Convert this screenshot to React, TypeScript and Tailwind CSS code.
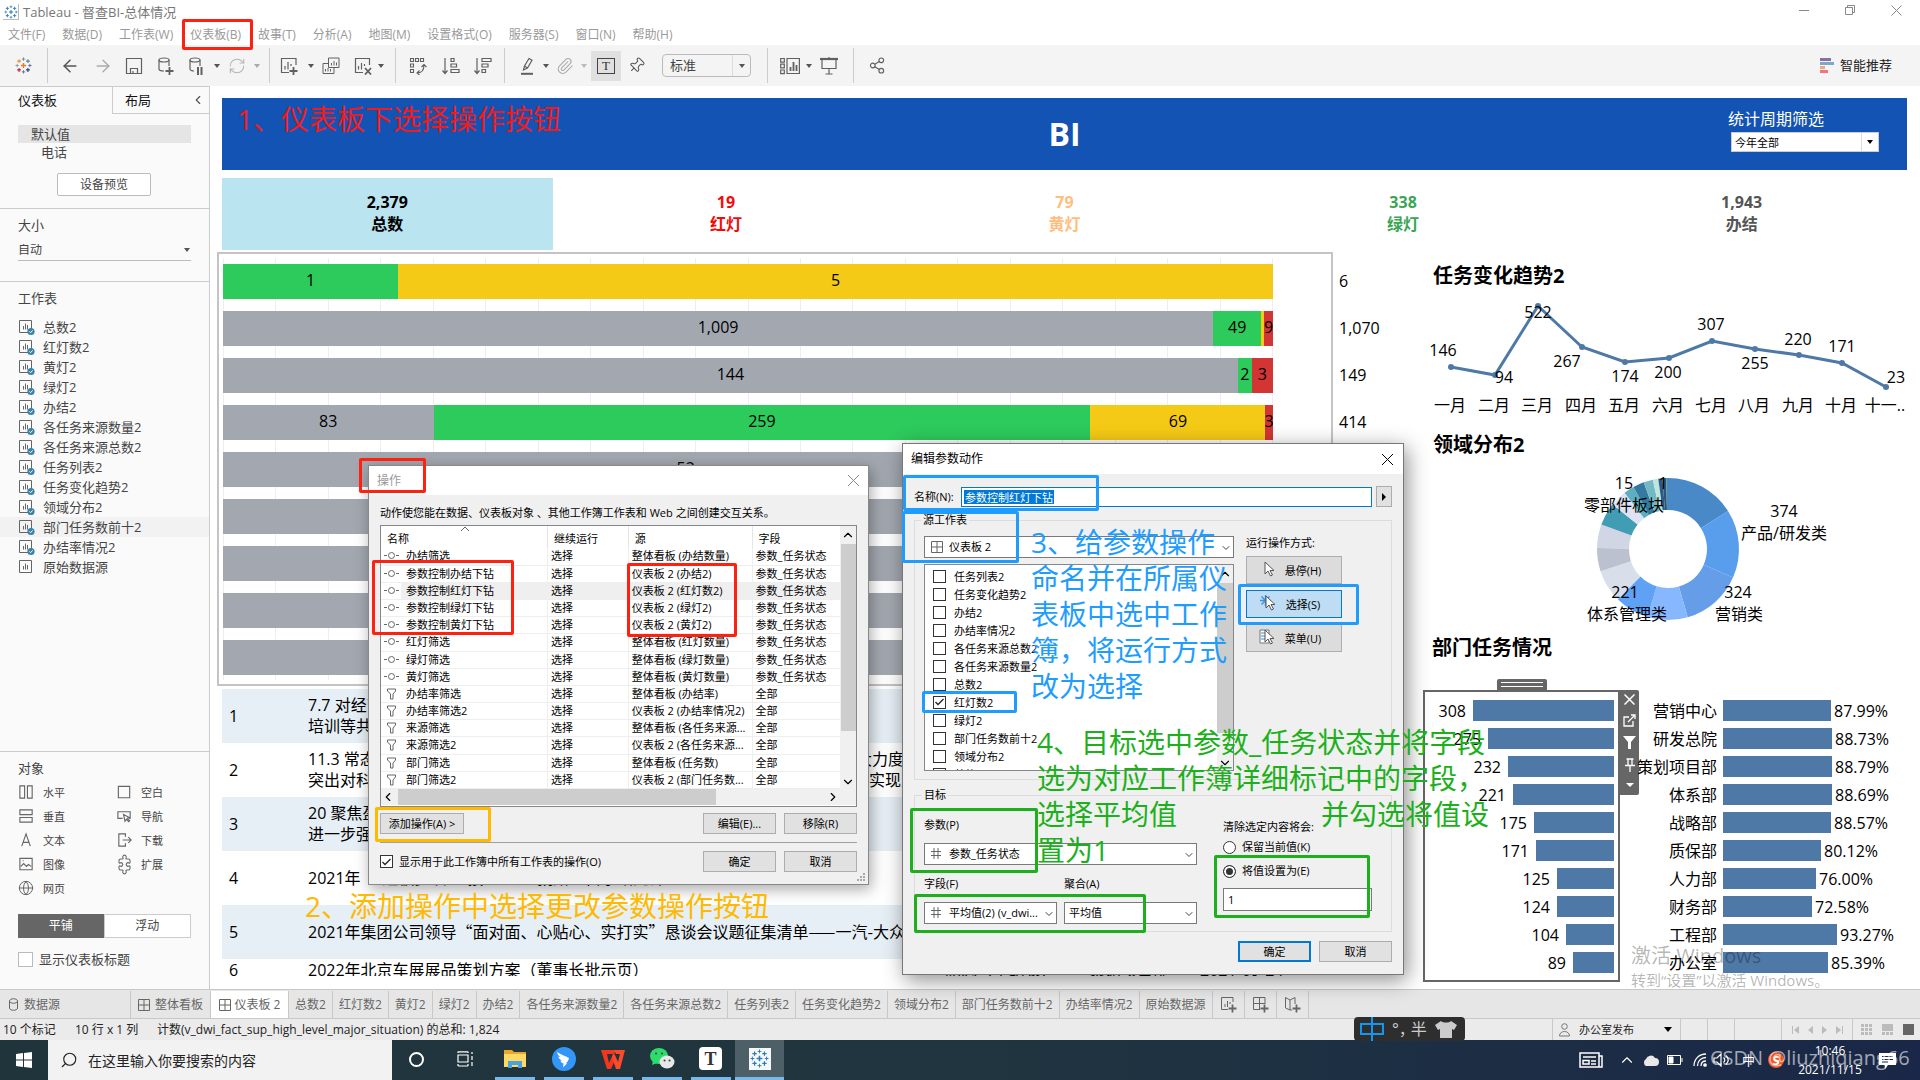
import React from "react";
import { ArrowLeft, ArrowRight, ChevronDown, ChevronLeft, ChevronRight, ChevronUp, Globe, Paperclip, Pin, Puzzle, RefreshCw, Search, X } from "lucide-react";

type Kids = { children?: React.ReactNode };

/* ---------- small drawings ---------- */

function TableauMark({ size, mono }: { size: number; mono?: boolean }) {
  const c = mono
    ? ["#2f7ab5", "#2f7ab5", "#2f7ab5", "#2f7ab5", "#2f7ab5", "#2f7ab5", "#2f7ab5", "#2f7ab5", "#2f7ab5"]
    : ["#e8762c", "#5b879b", "#c72035", "#5c6692", "#eb9129", "#59879b", "#c72035", "#1f457e", "#7199a6"];
  const plus = (x: number, y: number, r: number, color: string, w: number) => (
    <path key={`${x}-${y}`} d={`M${x - r} ${y}h${2 * r}M${x} ${y - r}v${2 * r}`} stroke={color} strokeWidth={w} />
  );
  return (
    <svg width={size} height={size} viewBox="0 0 20 20" fill="none" aria-hidden="true">
      {plus(10, 10, 3, c[0], 1.6)}
      {plus(10, 2.5, 2, c[1], 1)}
      {plus(10, 17.5, 2, c[3], 1)}
      {plus(2.5, 10, 2, c[8], 1)}
      {plus(17.5, 10, 2, c[3], 1)}
      {plus(4.8, 4.8, 2.3, c[4], 1.3)}
      {plus(15.2, 4.8, 2.3, c[5], 1.3)}
      {plus(4.8, 15.2, 2.3, c[6], 1.3)}
      {plus(15.2, 15.2, 2.3, c[7], 1.3)}
    </svg>
  );
}

function Caret({ color = "#555" }: { color?: string }) {
  return (
    <svg width="6" height="4" viewBox="0 0 6 4" aria-hidden="true" className="shrink-0">
      <path d="M0 0h6L3 4z" fill={color} />
    </svg>
  );
}

function Ico({ children, size = 18, color = "#606060" }: Kids & { size?: number; color?: string }) {
  return (
    <svg width={size} height={size} viewBox="0 0 18 18" fill="none" stroke={color} strokeWidth="1.2" aria-hidden="true">
      {children}
    </svg>
  );
}

const GridIcon = () => (
  <svg width="12" height="12" viewBox="0 0 12 12" fill="none" stroke="#666" aria-hidden="true" className="shrink-0">
    <path d="M.5 .5h11v11H.5zM6 .5v11M.5 6h11" />
  </svg>
);

const HashIcon = () => (
  <svg width="10" height="11" viewBox="0 0 10 11" fill="none" stroke="#666" aria-hidden="true">
    <path d="M3 0v11M7 0v11M0 3.5h10M0 7.5h10" />
  </svg>
);

function SheetIcon({ used }: { used: boolean }) {
  return (
    <svg width="18" height="18" viewBox="0 0 18 18" fill="none" aria-hidden="true">
      <path d="M1.5 2.5h12v12h-12z" stroke="#666" />
      <path d="M5.5 11.500V8M7.500 11.500V5.500M9.500 11.500V7" stroke="#666" />
      {used && (
        <>
          <circle cx="13" cy="13.500" r="3.600" fill="#3b83a8" />
          <path d="M11.400 13.500l1.200 1.200 2-2.300" stroke="#fff" />
        </>
      )}
    </svg>
  );
}

/* ---------- title, menu and toolbar ---------- */

const MENU = ["文件(F)", "数据(D)", "工作表(W)", "仪表板(B)", "故事(T)", "分析(A)", "地图(M)", "设置格式(O)", "服务器(S)", "窗口(N)", "帮助(H)"];

function TitleBar() {
  return (
    <header className="flex h-6 items-center bg-white pl-[3px] text-[13px] text-[#777]">
      <span className="grid size-4 place-items-center border-r border-b border-[#bbb]">
        <TableauMark size={14} mono />
      </span>
      <h1 className="ml-1">Tableau - 督查BI-总体情况</h1>
      <div className="mr-[18px] ml-auto flex items-start gap-[34px] pb-1">
        <button aria-label="最小化" className="grid size-3 place-items-center">
          <svg width="10" height="10"><path d="M0 5.500h10" stroke="#888" /></svg>
        </button>
        <button aria-label="还原" className="grid size-3 place-items-center">
          <svg width="10" height="10" fill="none" stroke="#888"><path d="M.5 2.500h7v7h-7zM2.500 2.500v-2h7v7h-2" /></svg>
        </button>
        <button aria-label="关闭" className="grid size-3 place-items-center">
          <svg width="11" height="11" stroke="#888"><path d="M.5 .5l10 10M10.500 .5l-10 10" /></svg>
        </button>
      </div>
    </header>
  );
}

function MenuBar() {
  return (
    <nav className="flex h-[21px] items-center gap-[17px] bg-white pl-2 text-[12px] text-[#999]">
      {MENU.map((m) => (
        <button key={m} className="whitespace-nowrap">{m}</button>
      ))}
    </nav>
  );
}

function Tool({ label, w, children }: Kids & { label: string; w: string }) {
  return (
    <button aria-label={label} className={`grid h-full shrink-0 place-items-center ${w}`}>
      {children}
    </button>
  );
}
const Sep = () => <span className="h-[35px] w-px shrink-0 bg-[#ccc]" />;

function Toolbar() {
  return (
    <div className="flex h-[41px] items-center bg-[#f4f4f4] text-[13px] text-[#444]">
      <Tool label="开始页" w="w-[47px]"><TableauMark size={17} /></Tool>
      <Sep />
      <Tool label="撤消" w="w-[44px]"><ArrowLeft size={20} strokeWidth={1.8} color="#555" /></Tool>
      <Tool label="重做" w="w-[22px]"><ArrowRight size={20} strokeWidth={1.6} color="#aaa" /></Tool>
      <Tool label="保存" w="w-[40px]">
        <Ico><path d="M1.500 1.500h15v15h-15zM5.500 16v-4.500h7V16M8 14v2" /></Ico>
      </Tool>
      <Tool label="新建数据源" w="w-[24px]">
        <Ico>
          <ellipse cx="7" cy="3" rx="5" ry="2" />
          <path d="M2 3v9c0 1 2 2 5 2M12 3v6" />
          <path d="M8.500 14h8M12.500 10v8" strokeWidth="1.800" />
        </Ico>
      </Tool>
      <Tool label="暂停自动更新" w="w-[36px]">
        <Ico>
          <ellipse cx="8" cy="3" rx="5" ry="2" />
          <path d="M3 3v9c0 1 2 2 4 2M13 3v6" />
          <path d="M11 10v8M14.500 10v8" strokeWidth="2" />
        </Ico>
      </Tool>
      <Caret />
      <Tool label="刷新" w="w-[34px]"><RefreshCw size={18} strokeWidth={1.400} color="#b5b5b5" /></Tool>
      <Caret color="#aaa" />
      <span className="w-[9px] shrink-0" />
      <Sep />
      <Tool label="新建工作表" w="w-[38px]">
        <Ico>
          <path d="M16 8V1.500H1.500v14H9M5 12.500V9M8 12.500V5M11 9V7" />
          <path d="M9.500 14h8M13.500 10v8" strokeWidth="1.800" />
        </Ico>
      </Tool>
      <Caret />
      <Tool label="复制" w="w-[34px]">
        <Ico>
          <path d="M6.500 1h10.500v9.500H6.500zM9.500 8.500V6M12 8.500V4M14.500 8.500V5.500M6.500 6.500H1v10h11v-6M3.500 14.500V12M6 14.500V11M8.500 14.500V12" strokeWidth="1" />
        </Ico>
      </Tool>
      <Tool label="清除工作表" w="w-[30px]">
        <Ico>
          <path d="M15.500 8V1.500H1.500v14H9M4.500 12.500V9M7.500 12.500V6M10.500 9V7" />
          <path d="M11 11l6 6.500M17 11l-6 6.500" strokeWidth="1.800" />
        </Ico>
      </Tool>
      <Caret />
      <span className="w-[11px] shrink-0" />
      <Sep />
      <Tool label="交换行和列" w="w-[44px]">
        <Ico>
          <path d="M1.500 1.500h3v3h-3zM6.500 1.500h3v3h-3zM11.500 1.500h3v3h-3zM1.500 7h3v3h-3zM1.500 12.500h3v3h-3zM8 16c5 0 7-3 7-8M12.500 10L15 7.500l2.500 2.500M10.500 13.500L8 16l2.500 2" strokeWidth="1.100" />
        </Ico>
      </Tool>
      <Tool label="升序排序" w="w-[22px]">
        <Ico><path d="M3 1v15M.5 13.500L3 16.500l2.500-3M9 1.500h3v3H9zM9 7h5.500v3H9zM9 12.500h8v3H9z" /></Ico>
      </Tool>
      <Tool label="降序排序" w="w-[42px]">
        <Ico><path d="M3 1v15M.5 13.500L3 16.500l2.500-3M8 1.500h9v3H8zM8 7h6v3H8zM8 12.500h3.500v3H8z" /></Ico>
      </Tool>
      <Sep />
      <Tool label="突出显示" w="w-[44px]">
        <Ico><path d="M3 16.800h12" strokeWidth="2" /><path d="M5.500 13l1-4L11 1.500l3 1.700L9.500 11zM6.500 9l3 2" /></Ico>
      </Tool>
      <span className="-ml-[6px] flex"><Caret /></span>
      <Tool label="组成员" w="w-[32px]"><Paperclip size={18} strokeWidth={1.400} color="#aaa" /></Tool>
      <Caret color="#bbb" />
      <span className="ml-1 grid h-[30px] w-[30px] shrink-0 place-items-center bg-[#e0e0e0]">
        <button aria-label="显示标记标签" className="grid h-4 w-[18px] place-items-center border border-[#444] font-['Liberation_Serif',serif] text-[13px] leading-none text-[#333]">T</button>
      </span>
      <Tool label="固定轴" w="w-[30px]"><Pin size={17} strokeWidth={1.500} color="#555" className="rotate-45" /></Tool>
      <div className="relative ml-[11px] w-[89px] shrink-0">
        <select aria-label="适合" className="block h-[23px] w-full appearance-none rounded-sm border border-[#bbb] bg-[#f4f4f4] pl-[7px] text-[13px]">
          <option>标准</option>
        </select>
        <span className="pointer-events-none absolute inset-y-px right-px grid w-[18px] place-items-center border-l border-[#ddd]"><Caret /></span>
      </div>
      <span className="w-[16px] shrink-0" />
      <Sep />
      <Tool label="显示卡" w="w-[44px]">
        <svg width="20" height="18" viewBox="0 0 20 18" fill="none" stroke="#606060" strokeWidth="1.200">
          <path d="M.7 1.500h3.600v3.600H.7zM.7 7.200h3.600v3.600H.7zM.7 13h3.600v3.600H.7zM7 1.500h12.400v15H7z" />
          <path d="M10.500 14v-4M13.500 14V5M16.500 14V8" strokeWidth="1.800" />
        </svg>
      </Tool>
      <span className="-ml-[6px] flex"><Caret /></span>
      <Tool label="演示模式" w="w-[34px]">
        <Ico><path d="M0 2h18" strokeWidth="2.200" /><path d="M2 2v9.500h14V2M9 0v2M9 11.500V17M5.500 17h7" /></Ico>
      </Tool>
      <span className="w-[7px] shrink-0" />
      <Sep />
      <Tool label="共享" w="w-[46px]">
        <Ico size={17}><circle cx="4" cy="9" r="2.500" /><circle cx="13" cy="3.500" r="2.500" /><circle cx="13" cy="14.500" r="2.500" /><path d="M6.200 7.700l4.600-2.900M6.200 10.300l4.600 2.900" /></Ico>
      </Tool>
      <button className="mr-[28px] ml-auto flex items-center gap-[6px] text-[#222]">
        <svg width="14" height="15"><path d="M0 0h11v3H0z" fill="#8b6f9e" /><path d="M0 4h14v3H0z" fill="#7ba6cf" /><path d="M0 8h5v3H0z" fill="#f5a77c" /><path d="M0 12h8v3H0z" fill="#f77080" /></svg>
        智能推荐
      </button>
    </div>
  );
}

/* ---------- sidebar ---------- */

const SHEETS = ["总数2", "红灯数2", "黄灯2", "绿灯2", "办结2", "各任务来源数量2", "各任务来源总数2", "任务列表2", "任务变化趋势2", "领域分布2", "部门任务数前十2", "办结率情况2", "原始数据源"];

const OBJECTS: [string, React.ReactNode][] = [
  ["水平", <path key="i" d="M2 2h5v13H2zM10 2h5v13h-5z" />],
  ["空白", <path key="i" d="M2.500 2.500h12v12h-12z" />],
  ["垂直", <path key="i" d="M2 2h13v5H2zM2 10h13v5H2z" />],
  ["导航", <path key="i" d="M7 11H2V4h13v7h-1M8 7l1.500 7 1.500-2 2.500 2.500 1-1L12 11l2-1z" />],
  ["文本", <path key="i" d="M4 15L8.500 2 13 15M5.500 11h6" />],
  ["下载", <path key="i" d="M10 5V2H3v13h7v-3M7 8.500h9M13 5.500l3 3-3 3" />],
  ["图像", <path key="i" d="M2 2.500h13v12H2zM3 11l3-3 3 3 2-2 3 2M5 5h1" />],
];

function Sidebar() {
  return (
    <aside className="flex w-[210px] shrink-0 flex-col border-t border-r border-[#ccc] bg-[#fafafa] text-[13px] text-[#444]">
      <div className="flex h-[27px]" role="tablist">
        <button role="tab" aria-selected="true" className="w-[112px] pl-[18px] text-left text-[#111]">仪表板</button>
        <div className="flex flex-1 items-center border-b border-l border-[#ccc] pr-1">
          <button role="tab" aria-selected="false" className="pl-3 text-[#111]">布局</button>
          <button aria-label="折叠" className="ml-auto"><ChevronLeft size={14} color="#555" /></button>
        </div>
      </div>
      <div className="px-[18px] pt-[11px]">
        <p className="h-[18px] bg-[#e5e5e5] pl-[13px] leading-[18px]">默认值</p>
        <p className="h-[18px] pl-[23px] leading-[18px]">电话</p>
        <button className="mt-3 ml-[39px] block h-[23px] w-[94px] rounded-xs border border-[#bbb] bg-white text-[12px]">设备预览</button>
      </div>
      <div className="mt-3 h-[73px] border-t border-[#ccc] px-[18px] pt-[7px]">
        <label htmlFor="size" className="block leading-[18px]">大小</label>
        <div className="relative mt-[3px]">
          <select id="size" className="h-6 w-full appearance-none border-b border-[#bbb] bg-transparent pt-[2px] text-[12px]">
            <option>自动</option>
          </select>
          <span className="pointer-events-none absolute top-[11px] right-[1px]"><Caret /></span>
        </div>
      </div>
      <div className="border-t border-[#ccc] pt-[7px]">
        <h2 className="pl-[18px] leading-[18px]">工作表</h2>
        <ul className="mt-[10px]">
          {SHEETS.map((s, i) => (
            <li key={s} className={`flex h-5 items-center gap-[7px] pl-[18px] ${i === 10 ? "bg-[#f2f2f2]" : ""}`}>
              <SheetIcon used={i < 12} />
              {s}
            </li>
          ))}
        </ul>
      </div>
      <div className="mt-auto h-[238px] border-t border-[#ccc] px-[18px] pt-[7px]">
        <h2 className="leading-[18px]">对象</h2>
        <div className="mt-[3px] grid grid-cols-[98px_1fr] text-[11px]">
          {OBJECTS.map(([name, icon]) => (
            <span key={name} className="flex h-6 items-center gap-2">
              <Ico size={17} color="#666">{icon}</Ico>
              {name}
            </span>
          ))}
          <span className="flex h-6 items-center gap-2"><Puzzle size={17} strokeWidth={1.500} color="#666" className="-rotate-45" />扩展</span>
          <span className="flex h-6 items-center gap-[9px]"><Globe size={16} strokeWidth={1.500} color="#666" />网页</span>
        </div>
        <div className="mt-[14px] flex h-6 text-[12px]">
          <button className="flex-1 bg-[#666] text-white">平铺</button>
          <button className="flex-1 border border-[#ccc] bg-white">浮动</button>
        </div>
        <label className="mt-[14px] flex items-center gap-[6px]">
          <input type="checkbox" className="size-[15px] appearance-none border border-[#bbb] bg-white" />
          显示仪表板标题
        </label>
      </div>
    </aside>
  );
}

/* ---------- dashboard ---------- */

const KPIS = [
  ["2,379", "总数", "text-black bg-[#bbe4f1]"],
  ["19", "红灯", "text-[#f50a0a]"],
  ["79", "黄灯", "text-[#ffbe7d]"],
  ["338", "绿灯", "text-[#3aa655]"],
  ["1,943", "办结", "text-[#555]"],
];

const G = "bg-[#2dca5c]";
const Y = "bg-[#f5ca16]";
const R = "bg-[#d33434]";
const A = "bg-[#a3a8b0]";
const ROWS: { total: string; parts: [number, string, string][] }[] = [
  { total: "6", parts: [[1, G, "1"], [5, Y, "5"]] },
  { total: "1,070", parts: [[1009, A, "1,009"], [49, G, "49"], [3, Y, ""], [9, R, "9"]] },
  { total: "149", parts: [[144, A, "144"], [2, G, "2"], [3, R, "3"]] },
  { total: "414", parts: [[83, A, "83"], [259, G, "259"], [69, Y, "69"], [3, R, "3"]] },
  { total: "", parts: [[52, A, "52"], [7, A, ""]] },
  { total: "", parts: [[1, A, ""]] },
  { total: "", parts: [[1, A, ""]] },
  { total: "", parts: [[1, A, ""]] },
  { total: "", parts: [[1, A, ""]] },
];

function SourceBars() {
  return (
    <div className="flex">
      <div className="flex-1 border-2 border-[#c4c4c4] pt-1 pr-[58px] pb-1 pl-1">
        <div className="grid">
          <div className="col-start-1 row-start-1 flex border-l border-[#eee]">
            {Array.from({ length: 20 }, (_, i) => (
              <span key={i} className="flex-1 border-r border-[#eee]" />
            ))}
          </div>
          <div className="col-start-1 row-start-1 flex flex-col gap-3 pt-[6px] pb-[5px]">
            {ROWS.map((r, i) => (
              <div key={i} className="flex h-[35px]">
                {r.parts.map(([v, color, label], j) => (
                  <div key={j} className={`flex basis-0 justify-center leading-[32px] ${color}`} style={{ flexGrow: v }}>
                    <span className="w-0 overflow-visible whitespace-nowrap"><span className="inline-block -translate-x-1/2">{label}</span></span>
                  </div>
                ))}
              </div>
            ))}
          </div>
        </div>
      </div>
      <ul className="flex w-[90px] flex-col gap-3 pt-3 pl-[6px]">
        {ROWS.map((r, i) => (
          <li key={i} className="h-[35px] leading-[35px]">{r.total}</li>
        ))}
      </ul>
    </div>
  );
}

const TASKS: { a: React.ReactNode; b?: React.ReactNode }[] = [
  { a: <>7.7 对经营<br />培训等共</> },
  { a: <>11.3 常态<br />突出对科</>, b: <>大力度<br /><span className="pl-[13px]">实现业</span></> },
  { a: <>20 聚焦盈<br />进一步强</> },
  { a: <>2021年<span className="pl-4">“短板多项”直接地”公益捐赠人自承诺先锋</span></> },
  { a: <>2021年<span className="font-['Noto_Sans_CJK_SC',sans-serif]">集团公司领导“面对面、心贴心、实打实”恳谈会议题征集清单——一汽-大众</span></> },
];

function TaskTable() {
  return (
    <div className="mt-[3px] mr-[21px] ml-[5px] h-[287px] overflow-hidden">
      <table className="w-full table-fixed border-collapse leading-[21px]">
        <colgroup>
          <col className="w-[86px]" />
          <col className="w-[548px]" />
          <col className="w-[89px]" />
          <col className="w-[144px]" />
          <col className="w-[111px]" />
          <col />
        </colgroup>
        <tbody>
          {TASKS.map((t, i) => (
            <tr key={i} className={`h-[54px] ${i % 2 ? "" : "bg-[#e6eff5]"}`}>
              <td className="pl-[7px]">{i + 1}</td>
              <td className="whitespace-nowrap">{t.a}</td>
              <td className="whitespace-nowrap">{t.b}</td>
              <td /><td /><td />
            </tr>
          ))}
          <tr className="h-[22px] whitespace-nowrap">
            <td className="pl-[7px]">6</td>
            <td>2022年北京车展展品策划方案（董事长批示页）</td>
            <td className="pl-[89px]">副总（单结表）</td>
            <td className="pl-[144px]">策划项目部</td>
            <td className="pl-[111px]">2021-09-24</td>
            <td />
          </tr>
        </tbody>
      </table>
    </div>
  );
}

const TREND: [number, number, string, number, number, string][] = [
  [28, 77, "146", 20, 66, "一月"],
  [72, 85, "94", 81, 93, "二月"],
  [115, 16, "522", 115, 28, "三月"],
  [159, 57, "267", 144, 77, "四月"],
  [202, 72, "174", 202, 92, "五月"],
  [246, 68, "200", 245, 88, "六月"],
  [289, 51, "307", 288, 40, "七月"],
  [332, 59, "255", 332, 79, "八月"],
  [376, 65, "220", 375, 55, "九月"],
  [419, 73, "171", 419, 62, "十月"],
  [463, 97, "23", 473, 93, "十一.."],
];

function Trend() {
  return (
    <svg width="496" height="130" viewBox="0 0 496 130" fontSize="16" textAnchor="middle" className="block">
      <polyline points={TREND.map((t) => `${t[0]},${t[1]}`).join(" ")} fill="none" stroke="#4e79a7" strokeWidth="3" />
      {TREND.map(([x, y, v, lx, ly, m]) => (
        <g key={m}>
          <circle cx={x} cy={y} r="3" fill="#4e79a7" />
          <text x={lx} y={ly}>{v}</text>
          <text x={x - 1} y="121">{m}</text>
        </g>
      ))}
    </svg>
  );
}

const SLICES: [number, string][] = [
  [57.7, "#4989c8"], [113.7, "#589eec"], [163.8, "#669de8"], [196.8, "#87b7ff"], [225, "#5fa2f5"], [251.8, "#d8deea"],
  [270.8, "#bcc1d0"], [290.2, "#d1d6e6"], [308.8, "#419db4"], [322.3, "#dfe2f2"], [330.9, "#5caec0"], [340, "#34799f"],
  [347.7, "#73b9c5"], [352.1, "#bfe5dc"], [355.5, "#2b5c88"], [358.5, "#27557f"], [360, "#4f8fa0"],
];

function Donut() {
  const cx = 245, cy = 88, R1 = 71, R0 = 39;
  const p = (r: number, deg: number) => {
    const t = (deg * Math.PI) / 180;
    return `${(cx + r * Math.sin(t)).toFixed(2)} ${(cy - r * Math.cos(t)).toFixed(2)}`;
  };
  const labels: [number, number, string][] = [
    [201, 28, "15"], [201, 50, "零部件板块"], [240, 28, "1"], [361, 56, "374"], [361, 78, "产品/研发类"],
    [315, 137, "324"], [316, 159, "营销类"], [202, 137, "221"], [204, 159, "体系管理类"],
  ];
  return (
    <svg width="496" height="170" viewBox="0 0 496 170" fontSize="16" textAnchor="middle" className="block">
      {SLICES.map(([end, color], i) => {
        const start = i ? SLICES[i - 1][0] : 0;
        return <path key={end} fill={color} d={`M${p(R1, start)}A${R1} ${R1} 0 0 1 ${p(R1, end)}L${p(R0, end)}A${R0} ${R0} 0 0 0 ${p(R0, start)}Z`} />;
      })}
      {labels.map(([x, y, t]) => (
        <text key={t} x={x} y={y}>{t}</text>
      ))}
    </svg>
  );
}

const DEPTS: [string, number, string, number][] = [
  ["308", 141, "营销中心", 87.99],
  ["275", 126, "研发总院", 88.73],
  ["232", 106, "策划项目部", 88.79],
  ["221", 101, "体系部", 88.69],
  ["175", 80, "战略部", 88.57],
  ["171", 78, "质保部", 80.12],
  ["125", 57, "人力部", 76.0],
  ["124", 57, "财务部", 72.58],
  ["104", 48, "工程部", 93.27],
  ["89", 41, "办公室", 85.39],
];

function DeptCharts() {
  return (
    <div className="flex">
      <div className="w-[197px]">
        <div className="mx-auto flex h-[11px] w-[50px] flex-col justify-center gap-[3px] rounded-t-xs bg-[#666] px-1">
          <span className="h-px bg-white" />
          <span className="h-px bg-white" />
        </div>
        <div className="flex h-[292px] flex-col gap-[7px] border-2 border-[#666] pt-2 pr-1">
          {DEPTS.map(([t, w]) => (
            <div key={t} className="flex h-[21px] items-center justify-end gap-[7px] leading-none">
              {t}
              <span className="h-full bg-[#4e79a7]" style={{ width: w }} />
            </div>
          ))}
        </div>
      </div>
      <div className="mt-[11px] flex h-[105px] w-[19px] shrink-0 flex-col items-center justify-between rounded-r-xs bg-[#666] pt-1 pb-[6px]">
        <svg width="11" height="11" stroke="#fff" strokeWidth="1.500"><path d="M.5 .5l10 10M10.500 .5l-10 10" /></svg>
        <svg width="13" height="13" fill="none" stroke="#fff" strokeWidth="1.300"><path d="M6 3H1v9h9V7M5 8l6-6M8 1h4v4" /></svg>
        <svg width="13" height="13" fill="#fff"><path d="M0 0h13L8 6v7H5V6z" /></svg>
        <svg width="10" height="14" fill="none" stroke="#fff" strokeWidth="1.300"><path d="M1.500 1h7M3 1v6M7 1v6M0 7.500h10M5 8v6" /></svg>
        <svg width="8" height="8" fill="#fff"><path d="M0 2h8L4 6z" /></svg>
      </div>
      <div className="mt-[21px] flex flex-1 flex-col gap-[7px]">
        {DEPTS.map(([t, , name, pct]) => (
          <div key={t} className="flex h-[21px] items-center leading-none whitespace-nowrap">
            <span className="w-[78px] text-right"><span className="-ml-4">{name}</span></span>
            <span className="ml-[6px] h-full bg-[#4e79a7]" style={{ width: Math.round(pct * 1.225) }} />
            <span className="ml-[3px]">{pct.toFixed(2)}%</span>
          </div>
        ))}
      </div>
    </div>
  );
}

function Dashboard() {
  return (
    <main className="flex-1 overflow-hidden bg-white pt-3 pl-[7px] text-[16px] text-black">
      <div className="mr-[13px] ml-[5px] grid h-[72px] grid-cols-[1fr_auto_1fr] items-center bg-[#1353b3] text-white">
        <span />
        <h2 className="text-[32px] leading-none font-bold">BI</h2>
        <div className="mr-[28px] mb-[10px] ml-auto w-[148px]">
          <label htmlFor="period" className="-ml-[3px] block leading-[26px]">统计周期筛选</label>
          <div className="relative">
            <select id="period" className="block h-5 w-full appearance-none border border-[#ccc] bg-white pl-[3px] text-[11px] text-black">
              <option>今年全部</option>
            </select>
            <span className="pointer-events-none absolute inset-y-px right-px grid w-[17px] place-items-center border-l border-[#ddd]"><Caret color="#000" /></span>
          </div>
        </div>
      </div>
      <div className="mt-2 mr-[13px] ml-[5px] grid grid-cols-5 gap-2 font-bold">
        {KPIS.map(([n, l, c]) => (
          <div key={l} className={`h-[72px] pt-[13px] text-center leading-[22px] ${c}`}>
            <p>{n}</p>
            <p>{l}</p>
          </div>
        ))}
      </div>
      <div className="mt-[2px] flex">
        <section className="min-w-0 flex-1">
          <SourceBars />
          <TaskTable />
        </section>
        <section className="w-[497px] shrink-0">
          <h3 className="mt-[9px] pl-[10px] text-[20px] leading-[29px] font-bold">任务变化趋势2</h3>
          <Trend />
          <h3 className="mt-[9px] pl-[10px] text-[20px] leading-8 font-bold">领域分布2</h3>
          <Donut />
          <h3 className="mt-px pl-[9px] text-[20px] leading-8 font-bold">部门任务情况</h3>
          <div className="mt-[15px]"><DeptCharts /></div>
        </section>
      </div>
    </main>
  );
}

/* ---------- bottom bars ---------- */

const TABS = ["总数2", "红灯数2", "黄灯2", "绿灯2", "办结2", "各任务来源数量2", "各任务来源总数2", "任务列表2", "任务变化趋势2", "领域分布2", "部门任务数前十2", "办结率情况2", "原始数据源"];

function SheetTabs() {
  return (
    <nav className="flex h-[30px] border-y border-[#c8c8c8] bg-[#e6e6e6] pt-px text-[12px] text-[#666]">
      <button className="flex w-[131px] items-center gap-[6px] border-r border-[#c8c8c8] pl-[9px]">
        <svg width="9" height="13" fill="none" stroke="#666"><path d="M.5 3v7c0 3 8 3 8 0V3M.5 3c0-3 8-3 8 0s-8 3-8 0" /></svg>
        数据源
      </button>
      <button className="flex w-[80px] items-center justify-center gap-[5px] border-r border-[#c8c8c8]"><GridIcon />整体看板</button>
      <button className="flex w-[78px] items-center justify-center gap-1 border-r border-[#c8c8c8] bg-white whitespace-nowrap"><GridIcon />仪表板 2</button>
      {TABS.map((t) => (
        <button key={t} className="border-r border-[#c8c8c8] px-[6px] whitespace-nowrap">{t}</button>
      ))}
      {["M13 6V1.500H1.500v12H8M5 11V8M7.500 11V5M10 8V6", "M13 8V1.500H1.500v12H8M7.500 1.500v12M1.500 7.500H13", "M1.500 1.500L6 4l5-2.500V8M1.500 1.500V12L6 14V4M6 14h2"].map((d, i) => (
        <button key={d} aria-label={["新建工作表", "新建仪表板", "新建故事"][i]} className="grid w-8 place-items-center border-r border-[#c8c8c8]">
          <svg width="17" height="17" fill="none" stroke="#666"><path d={d} /><path d="M8.500 12.500h8M12.500 8.500v8" strokeWidth="1.800" /></svg>
        </button>
      ))}
    </nav>
  );
}

function StatusBar() {
  return (
    <footer className="flex h-[21px] items-center bg-[#ebebeb] pl-[3px] text-[12px] text-[#222]">
      <span className="w-[72px]">10 个标记</span>
      <span className="w-[82px]">10 行 x 1 列</span>
      <span>计数(v_dwi_fact_sup_high_level_major_situation) 的总和: 1,824</span>
      <div className="ml-auto flex h-full items-stretch text-[11px]">
        <button className="flex w-[128px] items-center border-l border-[#c8c8c8] pr-2 pl-[6px]">
          <svg width="11" height="14" fill="none" stroke="#777"><circle cx="5.500" cy="3.500" r="2.800" /><path d="M.5 13c0-6 10-6 10 0z" /></svg>
          <span className="ml-[9px]">办公室发布</span>
          <span className="ml-auto"><svg width="8" height="5"><path d="M0 0h8L4 5z" /></svg></span>
        </button>
        <span className="w-[27px] border-l border-[#c8c8c8]" />
        <span className="w-[27px] border-l border-[#c8c8c8]" />
        <span className="w-[47px] border-l border-[#c8c8c8]" />
        <div className="flex w-[71px] items-center justify-center gap-[9px] border-l border-[#c8c8c8]">
          <svg width="7" height="8" fill="#bbb"><path d="M0 0h1v8H0zM7 0v8L2 4z" /></svg>
          <svg width="5" height="8" fill="#bbb"><path d="M5 0v8L0 4z" /></svg>
          <svg width="5" height="8" fill="#bbb"><path d="M0 0v8l5-4z" /></svg>
          <svg width="7" height="8" fill="#bbb"><path d="M6 0h1v8H6zM0 0v8l5-4z" /></svg>
        </div>
        <div className="flex w-[68px] items-center gap-[10px] border-l border-[#c8c8c8] pl-2">
          <svg width="11" height="11" fill="#bbb"><path d="M0 0h3v3H0zM4 0h3v3H4zM8 0h3v3H8zM0 4h3v3H0zM4 4h3v3H4zM8 4h3v3H8zM0 8h3v3H0zM4 8h3v3H4zM8 8h3v3H8z" /></svg>
          <svg width="11" height="11" fill="#bbb"><path d="M0 0h11v7H0zM0 8h3v3H0zM4 8h3v3H4zM8 8h3v3H8z" /></svg>
          <svg width="11" height="11"><path d="M0 0h11v11H0z" fill="#666" /></svg>
        </div>
      </div>
    </footer>
  );
}

function Task({ label, children, active, open = true }: Kids & { label: string; active?: boolean; open?: boolean }) {
  return (
    <button aria-label={label} className={`flex h-full w-[49px] shrink-0 flex-col items-center ${active ? "bg-[#4d6068]" : ""}`}>
      <span className="grid flex-1 place-items-center">{children}</span>
      <span className={`h-[3px] ${active ? "w-full" : "w-10"} ${open ? "bg-[#76b9ed]" : ""}`} />
    </button>
  );
}

function Taskbar() {
  return (
    <div className="flex h-10 items-center bg-linear-to-r from-[#1f343b] via-[#20353f] to-[#1a2748] text-white">
      <button aria-label="开始" className="grid h-full w-12 place-items-center">
        <svg width="16" height="16" fill="#fff"><path d="M0 2l7-1v6.500H0zM8 .9L16 0v7.500H8zM0 8.500h7V15l-7-1zM8 8.500h8V16l-8-1z" /></svg>
      </button>
      <label className="flex h-full w-[344px] items-center bg-[#f2f2f2] pl-3 text-[#222]">
        <Search size={18} strokeWidth={1.500} className="-scale-x-100" />
        <input aria-label="搜索" defaultValue="在这里输入你要搜索的内容" className="ml-[10px] w-[280px] bg-transparent text-[14px] outline-none" />
      </label>
      <Task label="Cortana" open={false}><svg width="17" height="17" fill="none" stroke="#fff" strokeWidth="2"><circle cx="8.500" cy="9.500" r="6.500" /></svg></Task>
      <Task label="任务视图" open={false}>
        <svg width="17" height="16" fill="none" stroke="#fff" strokeWidth="1.200"><path d="M1 4h10v7H1zM1 2V.5M11 2V.5M1 .8h10M1 13v2M11 13v2M1 15h10M15 1v2M15 5v4M15 11v4" /></svg>
      </Task>
      <Task label="文件资源管理器">
        <svg width="22" height="18" viewBox="0 0 22 18"><path d="M0 0h8l2 2h12v14H0z" fill="#e9a825" /><path d="M0 4h22v13H0z" fill="#ffd968" /><path d="M4 18v-7h14v7h-4v-3H8v3z" fill="#4aa3df" /></svg>
      </Task>
      <Task label="钉钉">
        <svg width="24" height="24"><circle cx="12" cy="12" r="12" fill="#3296fa" /><path d="M5 5c4 3 8 3.500 12 6-1 4-2 4-3 5l1 .5-4 4 .5-4c-2-.5-3-2-3-3l2 .3C7 12 6.500 11 6.500 9.500l2 .5C6 8.500 5.500 7 5 5z" fill="#fff" /></svg>
      </Task>
      <Task label="WPS">
        <svg width="24" height="20" viewBox="0 0 24 20"><path d="M0 1h15l-2 4H6l2 9 4-9 3 4-5 11H6z" fill="#f5351d" /><path d="M13 1h11l-5 19h-4L11 8l2-4 4 9 2-8h-4z" fill="#ff4a2a" /></svg>
      </Task>
      <Task label="微信">
        <svg width="26" height="24"><ellipse cx="10" cy="9" rx="9" ry="8" fill="#2ddc6c" /><path d="M4 14l-1 4 5-2z" fill="#2ddc6c" /><ellipse cx="18" cy="15" rx="7.500" ry="6.500" fill="#e8e8e8" /><path d="M7 6.500h.1M13 6.500h.1M15.500 13.500h.1M20.500 13.500h.1" stroke="#444" strokeWidth="2" strokeLinecap="round" /></svg>
      </Task>
      <Task label="Typora">
        <span className="grid size-[23px] place-items-center rounded-[4px] bg-white font-['Liberation_Serif',serif] text-[18px] leading-none font-bold text-[#333]">T</span>
      </Task>
      <Task label="Tableau" active>
        <span className="grid size-[22px] place-items-center bg-[#f4f8fb]"><TableauMark size={19} mono /></span>
      </Task>
      <div className="mr-[24px] ml-auto flex items-center text-[12px]">
        <svg width="24" height="16" fill="none" stroke="#fff" strokeWidth="1.500"><path d="M1 1h19v14H1zM20 4h3v11H3M4 5h13M4 8.500h6v3.500H4zM12 9h5M12 12h5" /></svg>
        <ChevronUp size={18} strokeWidth={1.500} className="ml-[15px]" />
        <svg width="17" height="12" className="ml-[6px]" fill="#e8e8e8"><path d="M4 12a4 4 0 0 1 0-7 5 5 0 0 1 9-1 4 4 0 0 1 0 8z" /></svg>
        <svg width="16" height="10" className="ml-2" fill="none" stroke="#fff"><path d="M.5 .5h13v9H.5zM15 3v4" /><path d="M2 2h4v6H2z" fill="#fff" /></svg>
        <svg width="14" height="14" className="ml-[10px]" fill="none" stroke="#fff" strokeWidth="1.300"><path d="M1 13C1 6 6 1 13 1M4.500 13c0-5 3.500-8.500 8.500-8.500M8 13c0-3 2-5 5-5" /><circle cx="12" cy="12" r="1.200" fill="#fff" /></svg>
        <svg width="17" height="14" className="ml-[6px]" fill="none" stroke="#fff" strokeWidth="1.200"><path d="M1 5h3l4-4v12L4 9H1zM10.500 4.500c1.500 1.500 1.500 3.500 0 5M13 2.500c3 3 3 6 0 9" /></svg>
        <span className="ml-3 text-[13px]">中</span>
        <span className="ml-[13px] grid size-4 place-items-center rounded-full bg-[#f25522] text-[13px] leading-none font-bold">S</span>
        <p className="ml-[10px] w-[72px] text-center leading-[19px]">10:46<br />2021/11/15</p>
        <svg width="17" height="17" className="ml-[13px]" fill="#fff"><path d="M0 1h17v12H9l-3 4v-4H0z" /><path d="M3 4.500h11M3 7.500h11M3 10h6" stroke="#1a2748" /></svg>
      </div>
    </div>
  );
}

/* ---------- dialogs ---------- */

const WIN_BTN = "h-[21px] w-[73px] border border-[#adadad] bg-[#e1e1e1]";

function Check({ id, label, checked, gap }: { id: string; label: string; checked?: boolean; gap: string }) {
  return (
    <label htmlFor={id} className={`flex items-center whitespace-nowrap ${gap}`}>
      <span className="grid size-[13px] shrink-0 place-items-center">
        <input id={id} type="checkbox" defaultChecked={checked} className="col-start-1 row-start-1 size-[13px] appearance-none border border-[#333] bg-white" />
        {checked && (
          <svg width="9" height="8" fill="none" stroke="#222" strokeWidth="1.300" className="pointer-events-none col-start-1 row-start-1"><path d="M.5 4L3 6.500 8.500 1" /></svg>
        )}
      </span>
      {label}
    </label>
  );
}

const ACTIONS: [string, string, string][] = [
  ["办结筛选", "整体看板 (办结数量)", "参数_任务状态"],
  ["参数控制办结下钻", "仪表板 2 (办结2)", "参数_任务状态"],
  ["参数控制红灯下钻", "仪表板 2 (红灯数2)", "参数_任务状态"],
  ["参数控制绿灯下钻", "仪表板 2 (绿灯2)", "参数_任务状态"],
  ["参数控制黄灯下钻", "仪表板 2 (黄灯2)", "参数_任务状态"],
  ["红灯筛选", "整体看板 (红灯数量)", "参数_任务状态"],
  ["绿灯筛选", "整体看板 (绿灯数量)", "参数_任务状态"],
  ["黄灯筛选", "整体看板 (黄灯数量)", "参数_任务状态"],
  ["办结率筛选", "整体看板 (办结率)", "全部"],
  ["办结率筛选2", "仪表板 2 (办结率情况2)", "全部"],
  ["来源筛选", "整体看板 (各任务来源...", "全部"],
  ["来源筛选2", "仪表板 2 (各任务来源...", "全部"],
  ["部门筛选", "整体看板 (任务数)", "全部"],
  ["部门筛选2", "仪表板 2 (部门任务数...", "全部"],
];

function ActionsDialog() {
  return (
    <div role="dialog" aria-label="操作" className="absolute top-[465px] left-[368px] w-[501px] border border-[#888] bg-[#f0f0f0] text-[11px] text-black shadow-[2px_4px_14px_rgba(0,0,0,0.35)]">
      <div className="flex h-[29px] items-center justify-between bg-white pr-[9px] pl-2 text-[12px] text-[#999]">
        操作
        <button aria-label="关闭"><svg width="11" height="11" stroke="#888"><path d="M0 0l11 11M11 0L0 11" /></svg></button>
      </div>
      <div className="px-[11px] pb-3">
        <p className="pt-[9px] leading-[18px] whitespace-nowrap">动作使您能在数据、仪表板对象 、其他工作簿工作表和 Web 之间创建交互关系。</p>
        <div className="relative mt-[3px] h-[282px] border border-[#828790] bg-white">
          <div className="flex">
            <table className="flex-1 table-fixed border-collapse leading-4 whitespace-nowrap">
              <colgroup>
                <col className="w-[20px]" />
                <col className="w-[147px]" />
                <col className="w-[81px]" />
                <col className="w-[124px]" />
                <col className="w-[88px]" />
              </colgroup>
              <thead>
                <tr className="h-[22px] text-left">
                  <th colSpan={2} className="border-r border-[#e5e5e5] pt-1 pl-[6px] font-normal">名称</th>
                  <th className="border-r border-[#e5e5e5] pt-1 pl-[6px] font-normal">继续运行</th>
                  <th className="border-r border-[#e5e5e5] pt-1 pl-[6px] font-normal">源</th>
                  <th className="pt-1 pl-[6px] font-normal">字段</th>
                </tr>
              </thead>
              <tbody>
                {ACTIONS.map(([n, s, f], i) => (
                  <tr key={n} className="h-[17px] border-b border-[#eee]">
                    <td className="pl-[3px]">
                      {i < 8 ? (
                        <svg width="15" height="10" fill="none" stroke="#666"><circle cx="7.500" cy="4.500" r="3" /><path d="M0 4.500h3M12 4.500h3" /></svg>
                      ) : (
                        <svg width="15" height="12" fill="none" stroke="#666"><path d="M3.500 1h8v2L9 6v5H6.500V6l-3-3z" /></svg>
                      )}
                    </td>
                    {[n, "选择", s, f].map((c, j) => (
                      <td key={j} className={`${j === 0 ? "pl-[5px]" : "pl-[3px]"} ${j < 3 ? "border-r border-[#eee]" : ""} ${i === 2 ? "bg-[#efefef]" : ""}`}>{c}</td>
                    ))}
                  </tr>
                ))}
              </tbody>
            </table>
            <div className="flex h-[263px] w-4 flex-col items-center bg-[#f0f0f0]">
              <ChevronUp size={14} className="my-[2px] shrink-0" />
              <span className="h-[187px] w-[15px] shrink-0 bg-[#cdcdcd]" />
              <ChevronDown size={14} className="mt-auto" />
            </div>
          </div>
          <div className="flex h-4 items-center bg-[#f0f0f0] pr-4">
            <ChevronLeft size={14} className="mr-[3px]" />
            <span className="h-4 w-[318px] bg-[#cdcdcd]" />
            <ChevronRight size={14} className="ml-auto" />
          </div>
          <svg width="8" height="4" fill="none" stroke="#666" className="absolute top-px left-[80px]"><path d="M0 4l4-4 4 4" /></svg>
        </div>
        <div className="flex gap-2 border-b border-[#a0a0a0] pt-[6px] pb-2">
          <button className="mr-auto h-[21px] w-[84px] border border-[#adadad] bg-[#e1e1e1]">添加操作(A) &gt;</button>
          <button className={WIN_BTN}>编辑(E)...</button>
          <button className={WIN_BTN}>移除(R)</button>
        </div>
        <div className="mt-2 flex items-center gap-2">
          <Check id="all" label="显示用于此工作簿中所有工作表的操作(O)" checked gap="gap-[6px]" />
          <button className={`ml-auto ${WIN_BTN}`}>确定</button>
          <button className={WIN_BTN}>取消</button>
        </div>
      </div>
      <svg width="8" height="8" fill="#aaa" className="absolute right-[3px] bottom-[3px]"><path d="M6 0h2v2H6zM3 3h2v2H3zM6 3h2v2H6zM0 6h2v2H0zM3 6h2v2H3zM6 6h2v2H6z" /></svg>
    </div>
  );
}

const SOURCES = ["任务列表2", "任务变化趋势2", "办结2", "办结率情况2", "各任务来源总数2", "各任务来源数量2", "总数2", "红灯数2", "绿灯2", "部门任务数前十2", "领域分布2", "总体2"];

function Combo({ label, value, icon, pad = "pl-1" }: { label: string; value: string; icon?: React.ReactNode; pad?: string }) {
  return (
    <span className="relative block w-full">
      <select aria-label={label} className={`block h-[22px] w-full appearance-none border border-[#7a7a7a] bg-white text-[11px] leading-[20px] ${pad}`}>
        <option>{value}</option>
      </select>
      {icon && <span className="pointer-events-none absolute top-[5px] left-[7px]">{icon}</span>}
      <ChevronDown size={12} color="#444" className="pointer-events-none absolute top-[6px] right-[2px]" />
    </span>
  );
}

const Cursor = () => <path d="M6 1v12l3-3 2.500 5 2-1L11 9.500h4z" fill="#fff" stroke="#555" />;

function EditDialog() {
  return (
    <div role="dialog" aria-label="编辑参数动作" className="absolute top-[443px] left-[902px] w-[502px] border border-[#777] bg-[#f0f0f0] text-[11px] text-black shadow-[3px_5px_20px_rgba(0,0,0,0.45)]">
      <div className="flex h-[30px] items-center justify-between bg-white pr-[10px] pl-2 text-[12px]">
        编辑参数动作
        <button aria-label="关闭"><svg width="11" height="11" stroke="#000"><path d="M0 0l11 11M11 0L0 11" /></svg></button>
      </div>
      <div className="px-[11px] pb-3">
        <div className="flex items-center pt-3">
          <label htmlFor="name" className="w-[47px]">名称(N):</label>
          <span className="flex h-5 flex-1 items-center border border-[#0078d7] bg-white pl-[2px]">
            <input id="name" defaultValue="参数控制红灯下钻" className="h-[14px] w-[90px] bg-[#0078d7] pl-px text-[11px] text-white outline-none" />
          </span>
          <button aria-label="插入" className="ml-1 grid h-[21px] w-4 place-items-center border border-[#adadad] bg-[#e1e1e1]"><svg width="4" height="8"><path d="M0 0v8l4-4z" /></svg></button>
        </div>
        <fieldset className="mt-[6px] flex h-[267px] border border-[#dcdcdc] px-[9px]">
          <legend className="-ml-[3px] px-[2px] leading-[14px]">源工作表</legend>
          <div className="w-[310px] pt-[9px]">
            <Combo label="源" value="仪表板 2" icon={<GridIcon />} pad="pl-[24px]" />
            <div className="mt-[6px] flex h-[207px] border border-[#828790] bg-white">
              <div className="flex-1 overflow-hidden pt-[2px] pl-2">
                {SOURCES.map((s) => (
                  <div key={s} className="flex h-[18px] items-center"><Check id={s} label={s} checked={s === "红灯数2"} gap="gap-2" /></div>
                ))}
              </div>
              <div className="flex w-4 flex-col items-center bg-[#f0f0f0]">
                <ChevronUp size={14} className="my-[2px] shrink-0" />
                <span className="h-[150px] w-4 bg-[#cdcdcd]" />
                <ChevronDown size={14} className="mt-auto" />
              </div>
            </div>
          </div>
          <div className="ml-3 flex w-24 flex-col gap-[6px] pt-[9px]">
            <p className="leading-[14px]">运行操作方式:</p>
            <button className="flex h-7 items-center justify-center gap-2 border border-[#adadad] bg-[#dcdcdc] pr-2"><svg width="18" height="18"><Cursor /></svg>悬停(H)</button>
            <button className="flex h-7 items-center justify-center gap-2 border border-[#0078d7] bg-[#bedcf4] pr-2"><svg width="18" height="18"><path d="M5.500 0v11M0 5.500h11M1.500 1.500l8 8M9.500 1.500l-8 8" stroke="#3b8ee0" strokeWidth="1.300" /><Cursor /></svg>选择(S)</button>
            <button className="flex h-7 items-center justify-center gap-2 border border-[#adadad] bg-[#dcdcdc] pr-2"><svg width="18" height="18"><path d="M1 1h9v13H1z" fill="#fff" stroke="#777" /><path d="M2 4h4M2 7h4M2 10h4" stroke="#3b8ee0" /><Cursor /></svg>菜单(U)</button>
          </div>
        </fieldset>
        <fieldset className="mt-2 flex h-[144px] border border-[#dcdcdc] px-[9px]">
          <legend className="-ml-[2px] px-[2px] leading-[14px]">目标</legend>
          <div className="w-[273px] pt-4">
            <p className="leading-[14px]">参数(P)</p>
            <div className="mt-[11px]"><Combo label="参数" value="参数_任务状态" icon={<HashIcon />} pad="pl-[24px]" /></div>
            <div className="mt-3 grid grid-cols-2 gap-x-[7px] gap-y-[11px] leading-[14px]">
              <p>字段(F)</p>
              <p>聚合(A)</p>
              <Combo label="字段" value="平均值(2) (v_dwi..." icon={<HashIcon />} pad="pl-[24px]" />
              <Combo label="聚合" value="平均值" />
            </div>
          </div>
          <div className="ml-[26px] w-[149px] pt-[18px] leading-[14px]">
            <p>清除选定内容将会:</p>
            <label className="mt-[6px] flex items-center gap-[6px]">
              <input type="radio" name="clear" className="size-[13px] appearance-none rounded-full border border-[#333] bg-white" />
              保留当前值(K)
            </label>
            <label className="mt-[10px] flex items-center gap-[6px]">
              <input type="radio" name="clear" defaultChecked className="size-[13px] appearance-none rounded-full border border-[#333] bg-[#333] ring-2 ring-white ring-inset" />
              将值设置为(E)
            </label>
            <input aria-label="值" defaultValue="1" className="mt-[10px] h-[23px] w-full border border-[#7a7a7a] bg-white pl-1 text-[11px]" />
          </div>
        </fieldset>
        <div className="mt-[9px] flex justify-end gap-2">
          <button className="h-[21px] w-[73px] border-2 border-[#0078d7] bg-[#e1e1e1]">确定</button>
          <button className={WIN_BTN}>取消</button>
        </div>
      </div>
    </div>
  );
}

/* ---------- mark-up drawn over the desktop ---------- */

const RED = "border-[#ff2010]";
const BLUE = "border-[#1e9dff]";
const GREEN = "border-[#1cb01c]";

function Notes() {
  const box = "pointer-events-none absolute rounded-xs border-3";
  const note = "pointer-events-none absolute text-[28px] leading-9 whitespace-pre";
  return (
    <>
      <span className={`${box} ${RED} top-[19px] left-[182px] h-[31px] w-[71px]`} />
      <span className={`${box} ${RED} top-[458px] left-[359px] h-[35px] w-[67px]`} />
      <span className={`${box} ${RED} top-[560px] left-[372px] h-[75px] w-[142px]`} />
      <span className={`${box} ${RED} top-[563px] left-[627px] h-[74px] w-[110px]`} />
      <span className={`${box} top-[807px] left-[375px] h-[35px] w-[116px] border-[#ffb900]`} />
      <span className={`${box} ${BLUE} top-[475px] left-[903px] h-[36px] w-[196px]`} />
      <span className={`${box} ${BLUE} top-[511px] left-[902px] h-[52px] w-[117px]`} />
      <span className={`${box} ${BLUE} top-[691px] left-[922px] h-[22px] w-[95px]`} />
      <span className={`${box} ${BLUE} top-[584px] left-[1238px] h-[41px] w-[121px]`} />
      <span className={`${box} ${GREEN} top-[808px] left-[910px] h-[65px] w-[128px]`} />
      <span className={`${box} ${GREEN} top-[894px] left-[914px] h-[39px] w-[232px]`} />
      <span className={`${box} ${GREEN} top-[855px] left-[1214px] h-[63px] w-[156px]`} />
      <p className={`${note} top-[101px] left-[237px] text-[#f21b1b]`}>1、仪表板下选择操作按钮</p>
      <p className={`${note} top-[888px] left-[305px] text-[#ffb900]`}>2、添加操作中选择更改参数操作按钮</p>
      <p className={`${note} top-[524px] left-[1031px] text-[#1e9dff]`}>{"3、给参数操作\n命名并在所属仪\n表板中选中工作\n簿，将运行方式\n改为选择"}</p>
      <p className={`${note} top-[724px] left-[1037px] text-[#1cb01c]`}>{"4、目标选中参数_任务状态并将字段\n选为对应工作簿详细标记中的字段，\n选择平均值"}<span className="pl-[144px]">并勾选将值设</span>{"\n置为1"}</p>
      <div className="pointer-events-none absolute top-[942px] left-[1631px] whitespace-nowrap text-black/30">
        <p className="text-[20px] leading-7">激活 Windows</p>
        <p className="text-[15px] leading-5">转到“设置”以激活 Windows。</p>
      </div>
      <p className="pointer-events-none absolute top-[1044px] left-[1710px] text-[20px] leading-7 text-white/60">CSDN @liuzhiqiang66</p>
      <div className="absolute top-[1017px] left-[1354px] flex h-6 w-[111px] items-center gap-2 rounded-sm bg-[#2e2e2e] pl-[6px] text-[16px] text-[#ccc]">
        <svg width="24" height="24" fill="none" stroke="#1296f0" strokeWidth="2"><path d="M1 7h22v10H1zM12 0v24" /></svg>
        <span>°，</span>
        <span className="-ml-3">半</span>
        <svg width="22" height="18" fill="#ccc"><path d="M6 1c2 2 8 2 10 0l6 4-3 5-2-1v9H5V9l-2 1-3-5z" /></svg>
      </div>
    </>
  );
}

export default function App() {
  return (
    <div className="relative flex min-h-screen w-full flex-col overflow-hidden bg-white font-['Open_Sans','Noto_Sans_CJK_SC',sans-serif] leading-none">
      <TitleBar />
      <MenuBar />
      <Toolbar />
      <div className="flex flex-1">
        <Sidebar />
        <Dashboard />
      </div>
      <SheetTabs />
      <StatusBar />
      <Taskbar />
      <ActionsDialog />
      <EditDialog />
      <Notes />
    </div>
  );
}
